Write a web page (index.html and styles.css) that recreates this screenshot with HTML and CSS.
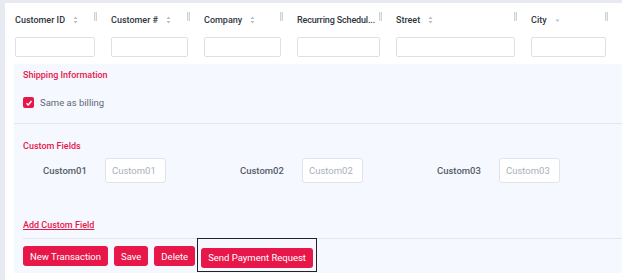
FILE: index.html
```html
<!DOCTYPE html>
<html lang="en">
<head>
    <meta charset="UTF-8">
    <title>Customers</title>
    <link rel="stylesheet" href="styles.css">
</head>
<body>

<div class="page">
    <div class="grid-head">
        <div class="col">
            <div class="col-title"><span>Customer ID</span><span class="sort"><svg width="5" height="8" viewBox="0 0 5 8"><path d="M2.5 0.5L4.5 3H0.5Z M2.5 7.5L4.5 5H0.5Z" fill="#b8bec8"/></svg></span><span class="grip"></span></div>
            <input type="text">
        </div>
        <div class="col">
            <div class="col-title"><span>Customer #</span><span class="sort"><svg width="5" height="8" viewBox="0 0 5 8"><path d="M2.5 0.5L4.5 3H0.5Z M2.5 7.5L4.5 5H0.5Z" fill="#b8bec8"/></svg></span><span class="grip"></span></div>
            <input type="text">
        </div>
        <div class="col">
            <div class="col-title"><span>Company</span><span class="sort"><svg width="5" height="8" viewBox="0 0 5 8"><path d="M2.5 0.5L4.5 3H0.5Z M2.5 7.5L4.5 5H0.5Z" fill="#b8bec8"/></svg></span><span class="grip"></span></div>
            <input type="text">
        </div>
        <div class="col">
            <div class="col-title"><span class="clip">Recurring Schedul...</span><span class="grip"></span></div>
            <input type="text">
        </div>
        <div class="col">
            <div class="col-title"><span>Street</span><span class="sort"><svg width="5" height="8" viewBox="0 0 5 8"><path d="M2.5 0.5L4.5 3H0.5Z M2.5 7.5L4.5 5H0.5Z" fill="#b8bec8"/></svg></span><span class="grip"></span></div>
            <input type="text">
        </div>
        <div class="col">
            <div class="col-title"><span>City</span><span class="sort"><svg width="5" height="8" viewBox="0 0 5 8"><path d="M2.5 6L4.5 3.5H0.5Z" fill="#b8bec8"/></svg></span><span class="grip"></span></div>
            <input type="text">
        </div>
    </div>

    <div class="detail">
        <div class="section">
            <h4>Shipping Information</h4>
            <label class="check">
                <span class="box"><svg width="8" height="8" viewBox="0 0 8 8"><path d="M1.5 4.3L3.2 6L6.5 2" stroke="#fff" stroke-width="1.4" fill="none"/></svg></span>
                Same as billing
            </label>
        </div>

        <div class="section custom">
            <h4>Custom Fields</h4>
            <div class="custom-row">
                <div class="field"><span class="field-label">Custom01</span><input type="text" placeholder="Custom01"></div>
                <div class="field"><span class="field-label">Custom02</span><input type="text" placeholder="Custom02"></div>
                <div class="field"><span class="field-label">Custom03</span><input type="text" placeholder="Custom03"></div>
            </div>
            <a href="#" class="add-link">Add Custom Field</a>
        </div>

        <div class="actions">
            <button>New Transaction</button>
            <button>Save</button>
            <button>Delete</button>
            <div class="highlight"><button>Send Payment Request</button></div>
        </div>
    </div>
</div>

</body>
</html>
```

FILE: styles.css
```css
/* base */
body {
    margin: 0;
    padding: 0;
    font-family: Roboto, "Noto Sans", Arial, sans-serif;
    background-color: #e7ebf1;
    color: #333;
}
.page {
    margin: 3px 0 0 5px;
    background-color: #fff;
    height: 277px;
    overflow: hidden;
}
.grid-head {
    display: grid;
    grid-template-columns: 96px 93px 93px 99px 135px 1fr;
    padding: 10px 0 0 10px;
    height: 51px;
}
.col {
    padding-right: 16px;
}
.col-title {
    display: flex;
    align-items: center;
    height: 13px;
    font-size: 9px;
    font-weight: 500;
    color: #2f3640;
    position: relative;
}
.col-title .clip {
    white-space: nowrap;
    overflow: hidden;
    max-width: 81px;
    letter-spacing: -0.15px;
}
.sort {
    margin-left: 8px;
    display: flex;
}
.grip {
    position: absolute;
    right: -2px;
    top: -1px;
    width: 1px;
    height: 9px;
    background-color: #eceef1;
    border-left: 1px solid #cfd3d9;
    border-right: 1px solid #cfd3d9;
}
.col input {
    display: block;
    box-sizing: border-box;
    width: 100%;
    height: 20px;
    margin-top: 11px;
    border: 1px solid #dde1e7;
    border-radius: 2px;
    background: #fff;
}
.detail {
    margin-left: 9px;
    background-color: #f5f8fe;
    height: 209px;
}
.section {
    padding: 6px 0 0 9px;
}
.section h4 {
    margin: 0;
    font-size: 9px;
    font-weight: 500;
    color: #e8174a;
}
.check {
    display: flex;
    align-items: center;
    margin-top: 17px;
    font-size: 9.5px;
    color: #5f6774;
    padding-bottom: 15px;
    border-bottom: 1px solid #e2e6ed;
    margin-left: -9px;
    padding-left: 9px;
}
.box {
    width: 11px;
    height: 11px;
    border-radius: 2px;
    background-color: #e8174a;
    display: flex;
    align-items: center;
    justify-content: center;
    margin-right: 6px;
}
.custom {
    padding-top: 17px;
}
.custom-row {
    display: grid;
    grid-template-columns: 197px 197px 1fr;
    margin-top: 7px;
    padding-left: 20px;
}
.field {
    display: flex;
    align-items: center;
}
.field-label {
    width: 62px;
    font-size: 9.5px;
    font-weight: 500;
    color: #555d6a;
}
.field input {
    box-sizing: border-box;
    width: 61px;
    height: 25px;
    border: 1px solid #e0e4ea;
    border-radius: 3px;
    background: #fff;
    padding: 0 6px;
    font-family: inherit;
    font-size: 9.5px;
}
.field input::placeholder {
    color: #a9afb9;
}
.add-link {
    display: inline-block;
    margin-top: 37px;
    font-size: 9px;
    font-weight: 500;
    color: #e8174a;
}
.actions {
    display: flex;
    align-items: flex-start;
    gap: 6px;
    margin: 6px 0 0 9px;
    padding-top: 7px;
    border-top: 1px solid #e2e6ed;
}
.actions button {
    height: 20px;
    padding: 0 7px;
    border: none;
    border-radius: 3px;
    background-color: #e8174a;
    color: #fff;
    font-family: inherit;
    font-size: 9.5px;
    cursor: pointer;
}
.highlight {
    margin-top: -8px;
    margin-left: -4px;
    border: 1px solid #222;
    padding: 7px 3px 3px 3px;
}
```
